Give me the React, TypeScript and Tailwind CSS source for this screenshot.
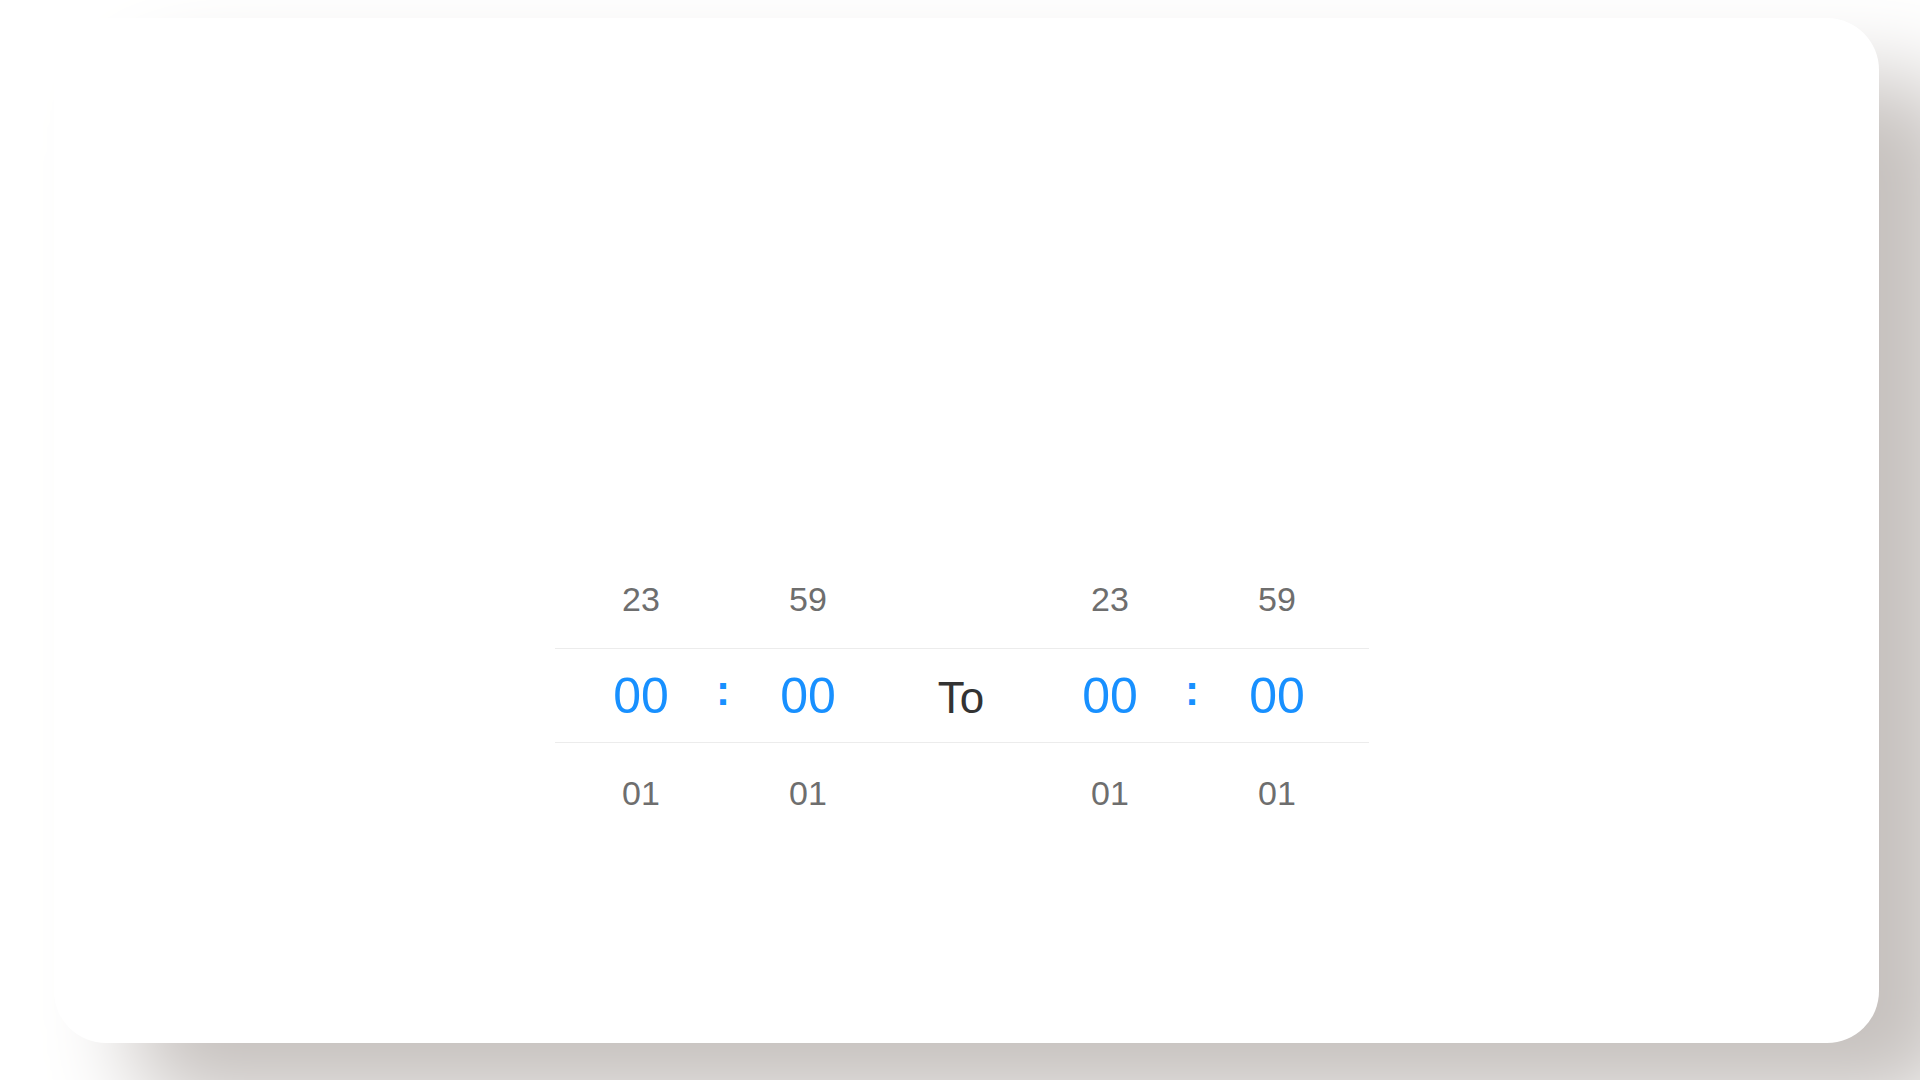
const cols = [
  { w: "w-[110px]", top: "23", mid: "00", bot: "01", kind: "num" },
  { w: "w-[54px]", top: "", mid: ":", bot: "", kind: "colon" },
  { w: "w-[116px]", top: "59", mid: "00", bot: "01", kind: "num" },
  { w: "w-[190px]", top: "", mid: "To", bot: "", kind: "to" },
  { w: "w-[108px]", top: "23", mid: "00", bot: "01", kind: "num" },
  { w: "w-[56px]", top: "", mid: ":", bot: "", kind: "colon" },
  { w: "w-[114px]", top: "59", mid: "00", bot: "01", kind: "num" },
];

function Side({ row }: { row: "top" | "bot" }) {
  return (
    <div className={`flex items-center pl-[31px] ${row === "top" ? "h-[99px]" : "h-[100px]"}`}>
      {cols.map((c, i) => (
        <div key={i} className={`${c.w} text-center text-[34px] leading-none text-[#6e6e6e]`}>
          {row === "top" ? c.top : c.bot}
        </div>
      ))}
    </div>
  );
}

export default function App() {
  return (
    <div
      className="h-screen w-screen overflow-hidden bg-white pt-[18px] pl-[54px]"
      style={{ fontFamily: '"Liberation Sans", Arial, Helvetica, sans-serif' }}
    >
      <div className="w-[1825px] h-[1025px] rounded-[52px] bg-white shadow-[80px_60px_90px_rgb(198,193,190)] pt-[531px]">
        <div className="ml-[501px] w-[814px]">
          <Side row="top" />
          <div className="flex items-center pl-[31px] h-[95px] border-y border-[#ececec]">
            {cols.map((c, i) => {
              if (c.kind === "num")
                return (
                  <div key={i} className={`${c.w} text-center text-[50px] leading-none text-[#1890ff]`}>
                    {c.mid}
                  </div>
                );
              if (c.kind === "colon")
                return (
                  <div key={i} className={`${c.w} text-center text-[42px] font-bold leading-none text-[#1890ff] mb-[10px]`}>
                    {c.mid}
                  </div>
                );
              return (
                <div key={i} className={`${c.w} text-center text-[44px] leading-none text-[#333333] pt-[4px]`}>
                  {c.mid}
                </div>
              );
            })}
          </div>
          <Side row="bot" />
        </div>
      </div>
    </div>
  );
}
